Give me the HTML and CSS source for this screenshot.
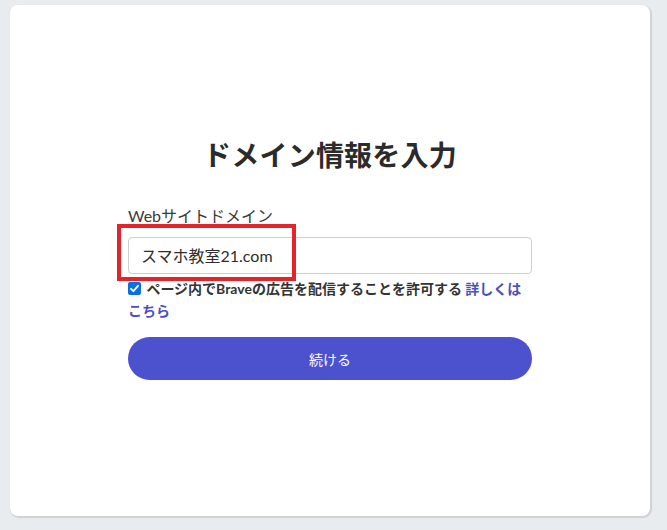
FILE: index.html
```html
<!DOCTYPE html>
<html lang="ja">
<head>
<meta charset="utf-8">
<link rel="stylesheet" href="styles.css">
</head>
<body>
<div class="card">
  <div class="form">
    <h1 class="title">ドメイン情報を入力</h1>
    <label class="label">Webサイトドメイン</label>
    <div class="field">
      <div class="input">スマホ教室21.com</div>
      <div class="highlight"></div>
    </div>
    <div class="consent">
      <span class="check"><svg width="13" height="13" viewBox="0 0 13 13"><rect x="0" y="0" width="13" height="13" rx="2" fill="#0a6fe0"/><path d="M3 6.8 L5.4 9.2 L10 3.8" fill="none" stroke="#fff" stroke-width="1.8" stroke-linecap="round" stroke-linejoin="round"/></svg></span>
      ページ内でBraveの広告を配信することを許可する <a class="link">詳しくはこちら</a>
    </div>
    <button class="btn">続ける</button>
  </div>
</div>
</body>
</html>
```
FILE: styles.css
```css
* { box-sizing: border-box; }
html, body { margin: 0; padding: 0; }
body {
  background: #e9ecef;
  width: 667px;
  height: 530px;
  padding: 5px 0 0 10px;
  font-family: "Lato", "Noto Sans CJK JP", sans-serif;
  color: #333;
}
.card {
  width: 640px;
  height: 511px;
  background: #fff;
  border-radius: 8px;
  box-shadow: 1px 1px 1px 1px #cfd1d4;
  display: flex;
  justify-content: center;
}
.form {
  width: 404px;
  padding-top: 130px;
  display: flex;
  flex-direction: column;
}
.title {
  margin: 0;
  text-align: center;
  font-size: 28px;
  font-weight: 700;
  color: #2b2b2b;
  line-height: 40px;
  letter-spacing: 0.2px;
}
.label {
  margin-top: 30px;
  font-size: 16px;
  line-height: 22px;
  color: #3a3a3a;
  font-weight: 400;
}
.field {
  position: relative;
  margin-top: 10px;
}
.input {
  height: 37px;
  border: 1px solid #cfcfcf;
  border-radius: 4px;
  padding: 0 12px;
  font-size: 16px;
  line-height: 35px;
  color: #2e2e2e;
}
.highlight {
  position: absolute;
  left: -11px;
  top: -13px;
  width: 179px;
  height: 57px;
  border: 4px solid #e3242b;
}
.consent {
  margin-top: 4px;
  font-size: 14px;
  font-weight: 700;
  line-height: 22px;
  color: #333;
}
.check {
  display: inline-block;
  width: 13px;
  height: 13px;
  vertical-align: -1px;
  margin-right: 2px;
}
.check svg { display: block; }
.link {
  color: #4a4fc0;
  text-decoration: none;
}
.btn {
  margin-top: 15px;
  height: 43px;
  border: none;
  border-radius: 22px;
  background: #4c52ce;
  color: #fff;
  font-family: inherit;
  font-size: 14px;
  font-weight: 400;
}
```
